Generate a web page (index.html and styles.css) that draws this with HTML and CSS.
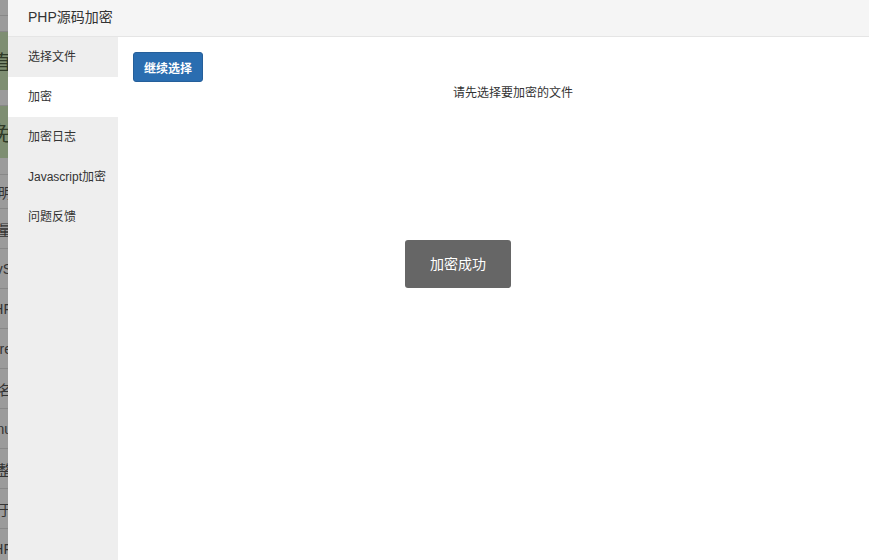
FILE: index.html
```html
<!DOCTYPE html>
<html lang="zh-CN">
<head>
    <meta charset="UTF-8">
    <title>PHP源码加密</title>
    <link rel="stylesheet" href="styles.css">
</head>
<body>

<div class="page">
    <!-- 背后页面露出的一条 -->
    <div class="behind">
        <div class="behind-row gray" style="height:16px"></div>
        <div class="behind-row gray" style="height:16px"></div>
        <div class="behind-row green" style="height:58px"><span>直</span></div>
        <div class="behind-row gray" style="height:16px"></div>
        <div class="behind-row green" style="height:52px"><span>免</span></div>
        <div class="behind-row gray" style="height:17px"></div>
        <div class="behind-row gray" style="height:34px"><span>明</span></div>
        <div class="behind-row gray line"><span>量</span></div>
        <div class="behind-row gray line"><span>vS</span></div>
        <div class="behind-row gray line"><span>HF</span></div>
        <div class="behind-row gray line"><span>ure</span></div>
        <div class="behind-row gray line"><span>名</span></div>
        <div class="behind-row gray line"><span>nu</span></div>
        <div class="behind-row gray line"><span>整</span></div>
        <div class="behind-row gray line"><span>于</span></div>
        <div class="behind-row gray line"><span>HF</span></div>
    </div>

    <div class="app">
        <div class="header">PHP源码加密</div>
        <div class="body">
            <ul class="sidebar">
                <li>选择文件</li>
                <li class="active">加密</li>
                <li>加密日志</li>
                <li>Javascript加密</li>
                <li>问题反馈</li>
            </ul>
            <div class="content">
                <button class="btn-primary">继续选择</button>
                <p class="tip">请先选择要加密的文件</p>
            </div>
        </div>
        <div class="toast">加密成功</div>
    </div>
</div>

</body>
</html>
```

FILE: styles.css
```css
html, body {
    margin: 0;
    padding: 0;
    height: 100%;
}
body {
    font-family: "Liberation Sans", "Noto Sans CJK SC", sans-serif;
    color: #333;
    background: #fff;
    overflow: hidden;
}
.page {
    display: flex;
    height: 560px;
}
.behind {
    width: 8px;
    overflow: hidden;
    background: #9b9b9b;
    flex-shrink: 0;
}
.behind-row {
    display: flex;
    align-items: center;
    justify-content: flex-end;
    font-size: 14px;
    color: #333;
    white-space: nowrap;
    box-sizing: border-box;
}
.behind-row.gray {
    background: #9b9b9b;
    border-bottom: 1px solid #888;
}
.behind-row.green {
    background: #7e8e72;
    color: #2f3a28;
    font-size: 20px;
}
.behind-row.line {
    height: 40px;
}
.behind-row span {
    margin-right: -4px;
}
.app {
    flex: 1;
    display: flex;
    flex-direction: column;
    position: relative;
}
.header {
    height: 36px;
    line-height: 35px;
    background: #f5f5f5;
    border-bottom: 1px solid #e5e5e5;
    padding-left: 20px;
    font-size: 14px;
    color: #333;
}
.body {
    flex: 1;
    display: flex;
}
.sidebar {
    list-style: none;
    margin: 0;
    padding: 0;
    width: 110px;
    background: #eee;
}
.sidebar li {
    height: 40px;
    line-height: 40px;
    padding-left: 20px;
    font-size: 12px;
    color: #333;
}
.sidebar li.active {
    background: #fff;
}
.content {
    flex: 1;
    padding: 15px;
}
.btn-primary {
    height: 30px;
    padding: 0 10px;
    background: #2a6db0;
    border: 1px solid #255f9a;
    border-radius: 3px;
    color: #fff;
    font-family: inherit;
    font-size: 12px;
    font-weight: bold;
}
.tip {
    margin: 1px 0 0;
    padding-left: 39px;
    text-align: center;
    font-size: 12px;
    color: #333;
}
.toast {
    position: absolute;
    left: 397px;
    top: 240px;
    padding: 15px 25px;
    line-height: 18px;
    background: #666;
    border-radius: 3px;
    color: #fff;
    font-size: 14px;
}
```
